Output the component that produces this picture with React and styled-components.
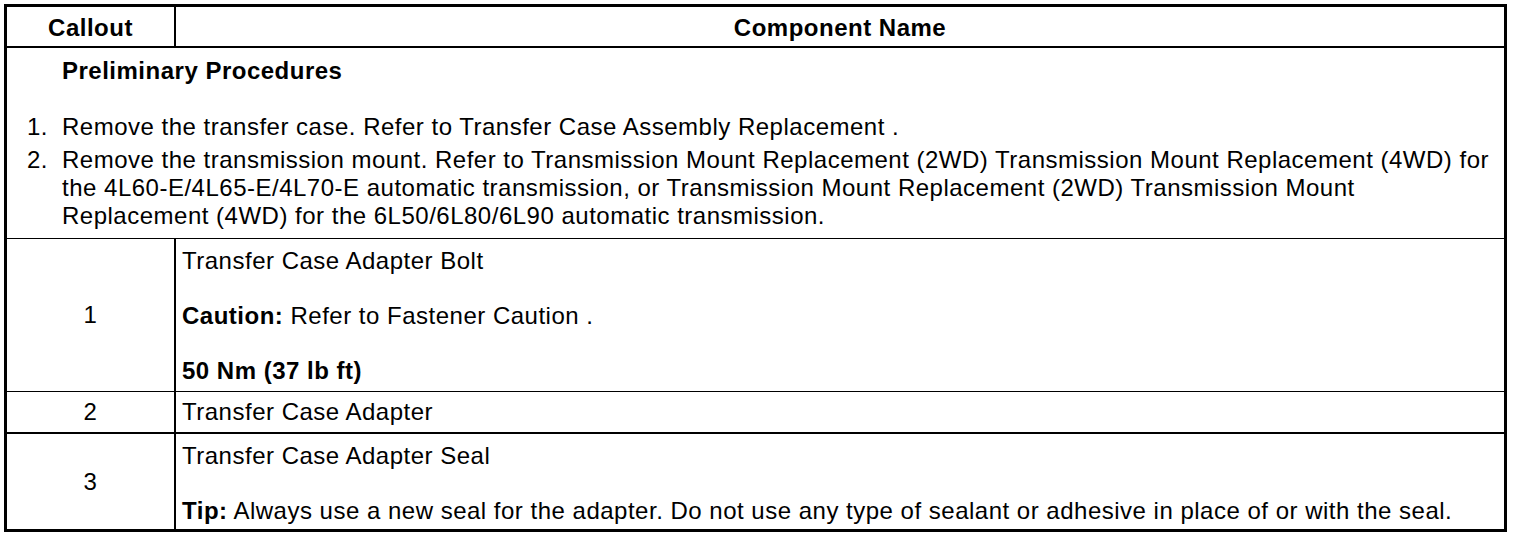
import React from "react";
import styled, { createGlobalStyle } from "styled-components";

const Global = createGlobalStyle`
  html, body { margin: 0; padding: 0; background: #fff; }
  body {
    font-family: "Liberation Sans", Arial, sans-serif;
    font-size: 24px;
    line-height: 28px;
    letter-spacing: 0.5px;
    color: #000;
  }
`;

const Page = styled.div`
  padding: 4px 0 0 4px;
`;

const Table = styled.div`
  width: 1503px;
  box-sizing: border-box;
  border: 3px solid #000;
`;

const Row = styled.div`
  display: grid;
  grid-template-columns: 169px 1fr;
  border-bottom: ${(p) => p.$rule || 0}px solid #000;
`;

const CalloutCell = styled.div`
  box-sizing: border-box;
  border-right: 2px solid #000;
  display: flex;
  align-items: center;
  justify-content: center;
  font-weight: ${(p) => (p.$head ? 700 : 400)};
  padding-top: ${(p) => (p.$head ? "3px" : "0")};
`;

const HeadName = styled.div`
  height: 39px;
  box-sizing: border-box;
  padding-top: 3px;
  display: flex;
  align-items: center;
  justify-content: center;
  font-weight: 700;
`;

const HeadCallout = styled(CalloutCell)`
  height: 39px;
`;

const NameCell = styled.div`
  display: flex;
  flex-direction: column;
  gap: 27px;
  padding: ${(p) => p.$pad};
`;

const Para = styled.div``;

const B = styled.b`
  font-weight: 700;
`;

const Prelim = styled.div`
  padding: 9px 10px 8px 0;
  border-bottom: 1px solid #000;
`;

const PrelimTitle = styled.div`
  margin-left: 55px;
  font-weight: 700;
  margin-bottom: 28px;
`;

const Steps = styled.ol`
  list-style: none;
  margin: 0;
  padding: 0;
  display: flex;
  flex-direction: column;
  gap: 5px;
`;

const Step = styled.li`
  display: grid;
  grid-template-columns: 55px 1fr;
`;

const StepNum = styled.span`
  text-align: right;
  padding-right: 14px;
`;

export default function App() {
  return (
    <Page>
      <Global />
      <Table>
        <Row $rule={2}>
          <HeadCallout $head>Callout</HeadCallout>
          <HeadName>Component Name</HeadName>
        </Row>
        <Prelim>
          <PrelimTitle>Preliminary Procedures</PrelimTitle>
          <Steps>
            <Step>
              <StepNum>1.</StepNum>
              <span>
                Remove the transfer case. Refer to Transfer Case Assembly
                Replacement .
              </span>
            </Step>
            <Step>
              <StepNum>2.</StepNum>
              <span>
                Remove the transmission mount. Refer to Transmission Mount
                Replacement (2WD) Transmission Mount Replacement (4WD) for the
                4L60-E/4L65-E/4L70-E automatic transmission, or Transmission
                Mount Replacement (2WD) Transmission Mount Replacement (4WD) for
                the 6L50/6L80/6L90 automatic transmission.
              </span>
            </Step>
          </Steps>
        </Prelim>
        <Row $rule={1}>
          <CalloutCell>1</CalloutCell>
          <NameCell $pad="8px 8px 6px 6px">
            <Para>Transfer Case Adapter Bolt</Para>
            <Para>
              <B>Caution:</B> Refer to Fastener Caution .
            </Para>
            <Para>
              <B>50 Nm (37 lb ft)</B>
            </Para>
          </NameCell>
        </Row>
        <Row $rule={2}>
          <CalloutCell>2</CalloutCell>
          <NameCell $pad="6px 8px 6px 6px">
            <Para>Transfer Case Adapter</Para>
          </NameCell>
        </Row>
        <Row>
          <CalloutCell>3</CalloutCell>
          <NameCell $pad="8px 8px 4px 6px">
            <Para>Transfer Case Adapter Seal</Para>
            <Para>
              <B>Tip:</B> Always use a new seal for the adapter. Do not use any
              type of sealant or adhesive in place of or with the seal.
            </Para>
          </NameCell>
        </Row>
      </Table>
    </Page>
  );
}
